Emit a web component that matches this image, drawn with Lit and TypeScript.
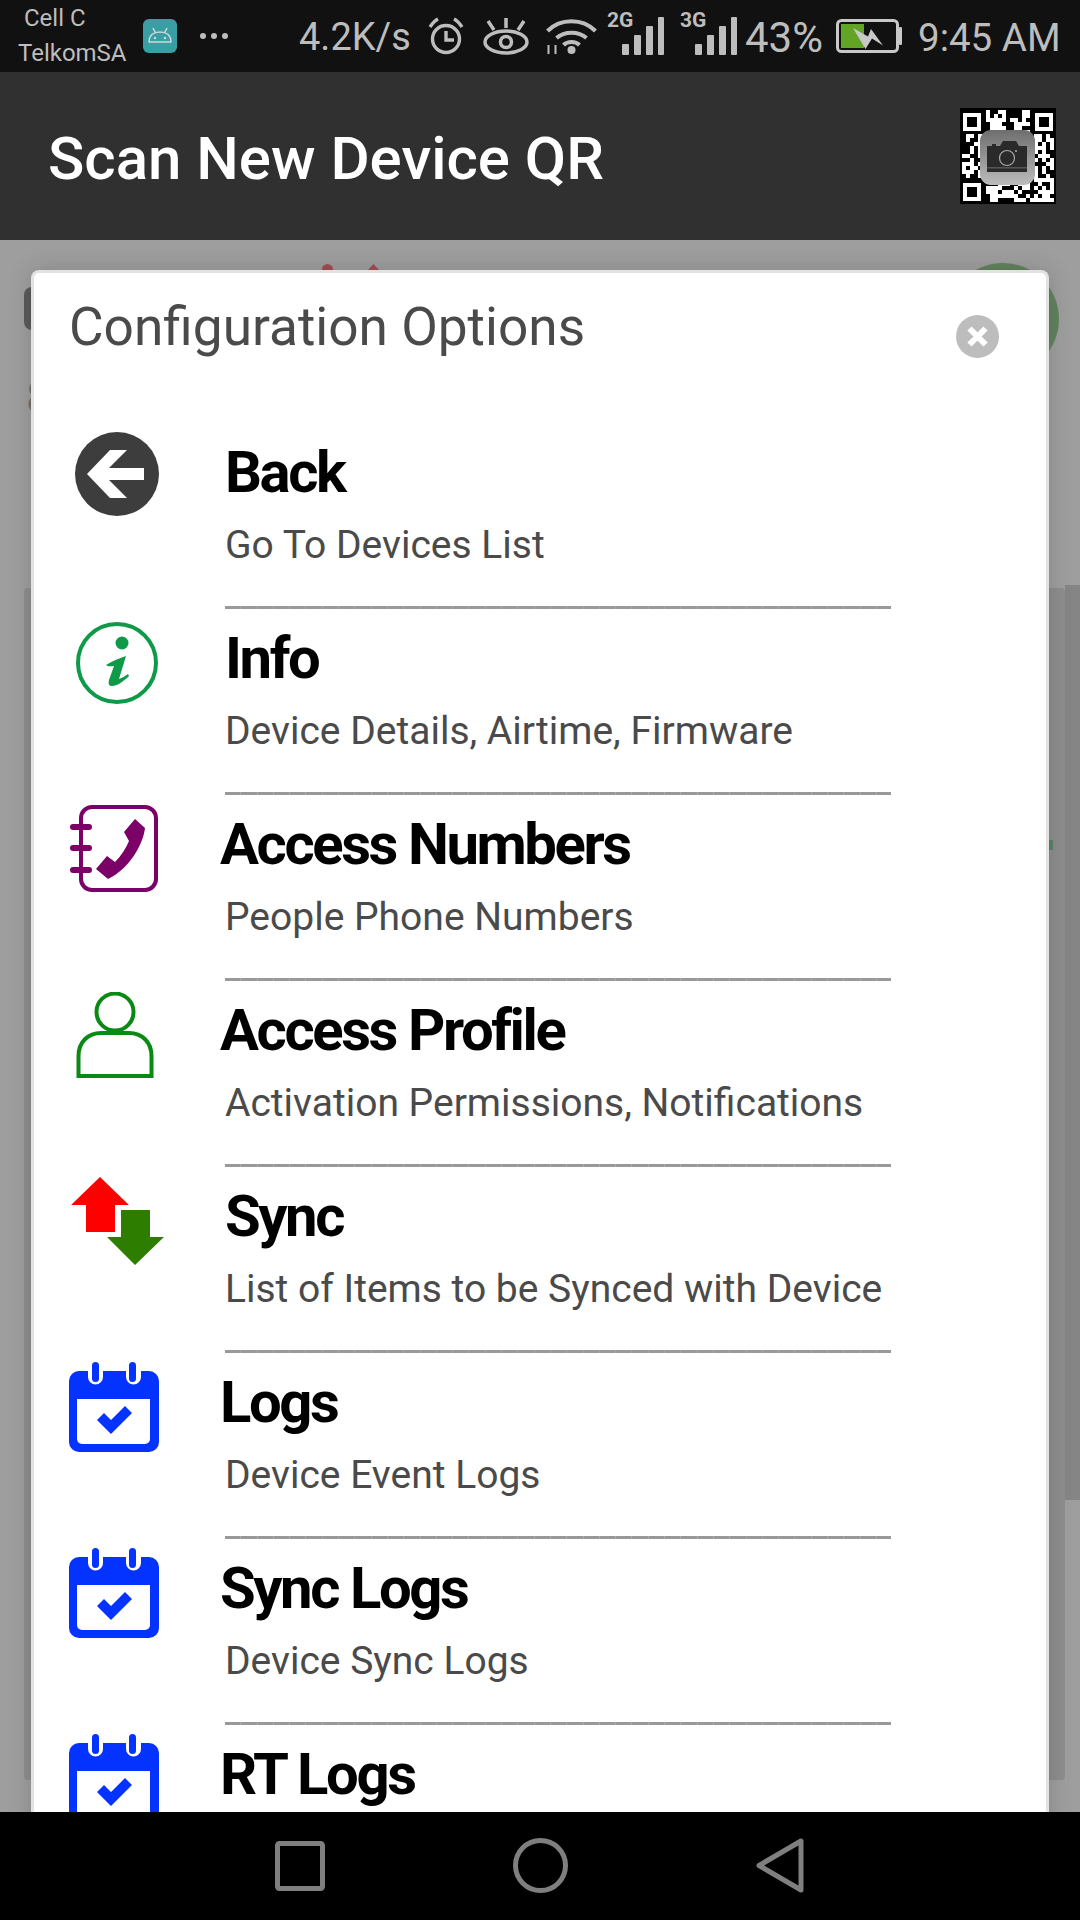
import { LitElement, html, css, svg } from 'lit';
import { customElement } from 'lit/decorators.js';

const calendar = svg`<svg viewBox="0 0 90 90" width="90" height="90">
  <path fill="#0433ff" d="M10 9h9v6a7.500 7.500 0 0 0 15 0V9h23v6a7.500 7.500 0 0 0 15 0V9h8a10 10 0 0 1 10 10v61a10 10 0 0 1-10 10H10A10 10 0 0 1 0 80V19A10 10 0 0 1 10 9z"/>
  <path fill="#fff" d="M8 37h73v40a5 5 0 0 1-5 5H13a5 5 0 0 1-5-5z"/>
  <rect x="23" y="0" width="7" height="20" rx="3.500" fill="#0433ff"/>
  <rect x="60" y="0" width="7" height="20" rx="3.500" fill="#0433ff"/>
  <path fill="#0433ff" d="M28 58l7-7 7 7 14-14 7 7-21 21z"/>
</svg>`;

const icons: Record<string, unknown> = {
  back: svg`<svg viewBox="0 0 84 84" width="84" height="84">
    <circle cx="42" cy="42" r="42" fill="#3d3d3d"/>
    <path fill="#fff" d="M12 42L35 18H52L34 36H69V48H34L52 66H35z"/>
  </svg>`,
  info: svg`<svg viewBox="0 0 82 82" width="82" height="82">
    <circle cx="41" cy="41" r="39" fill="none" stroke="#0f9a4a" stroke-width="4"/>
    <circle cx="46" cy="21" r="6.500" fill="#0f9a4a"/>
    <path fill="#0f9a4a" d="M30 43C36 39 44 36 50 34L43 57C46 56 49 54 52 52L53 54C47 60 41 64 36 64C33 64 32 62 33 58L38 44C35 44 32 45 30 43z"/>
  </svg>`,
  phone: svg`<svg viewBox="0 0 88 87" width="88" height="87">
    <rect x="11" y="2" width="75" height="83" rx="11" fill="none" stroke="#7b0068" stroke-width="4"/>
    <g fill="#7b0068"><rect x="0" y="19" width="22" height="6" rx="3"/><rect x="0" y="40" width="22" height="6" rx="3"/><rect x="0" y="62" width="22" height="6" rx="3"/></g>
    <path fill="#7b0068" d="M54 27L65 14L75 23C73 40 59 64 38 74L26 64L37 51L45 57C51 51 56 43 59 36z"/>
  </svg>`,
  profile: svg`<svg viewBox="0 0 78 86" width="78" height="86">
    <circle cx="39" cy="20" r="18.500" fill="none" stroke="#0a8a14" stroke-width="4"/>
    <path fill="none" stroke="#0a8a14" stroke-width="4" d="M2.500 84V64C2.500 50 12 41 25 41H53C66 41 75.500 50 75.500 64V84z"/>
  </svg>`,
  sync: svg`<svg viewBox="0 0 94 88" width="94" height="88">
    <path fill="#fe0000" d="M29 0L58 28H44V55H15V28H0z"/>
    <path fill="#2d7d00" d="M50 33H79V60H93L64 88 36 60H50z"/>
  </svg>`,
  calendar,
};

const rows = [
  { icon: 'back', title: 'Back', sub: 'Go To Devices List', shift: false },
  { icon: 'info', title: 'Info', sub: 'Device Details, Airtime, Firmware', shift: false },
  { icon: 'phone', title: 'Access Numbers', sub: 'People Phone Numbers', shift: true },
  { icon: 'profile', title: 'Access Profile', sub: 'Activation Permissions, Notifications', shift: true },
  { icon: 'sync', title: 'Sync', sub: 'List of Items to be Synced with Device', shift: false },
  { icon: 'calendar', title: 'Logs', sub: 'Device Event Logs', shift: true },
  { icon: 'calendar', title: 'Sync Logs', sub: 'Device Sync Logs', shift: true },
  { icon: 'calendar', title: 'RT Logs', sub: '', shift: true },
];

// not a real code, just modules that look like one
const qrModules = () => {
  const out: { x: number; y: number }[] = [];
  let seed = 7;
  for (let y = 1; y < 24; y++) {
    for (let x = 1; x < 24; x++) {
      seed = (seed * 137 + 59) % 1009;
      const inFinder = (x < 7 && y < 7) || (x > 17 && y < 7) || (x < 7 && y > 17);
      if (!inFinder && seed % 100 < 55) out.push({ x: x * 4 - 2, y: y * 4 - 2 });
    }
  }
  return out;
};

const finders = [
  [3, 5],
  [75, 5],
  [3, 75],
];

const bars = svg`<g fill="#bdbdbd">
  <rect x="16" y="35" width="7" height="11" rx="1"/><rect x="28" y="26" width="7" height="20" rx="1"/>
  <rect x="40" y="17" width="7" height="29" rx="1"/><rect x="52" y="8" width="6" height="38" rx="1"/>
</g>`;

@customElement('app-root')
export class AppRoot extends LitElement {
  static styles = css`
    :host {
      display: flex;
      flex-direction: column;
      width: 1080px;
      height: 1920px;
      overflow: hidden;
      font-family: Roboto, sans-serif;
      background: #000;
    }
    .status {
      height: 72px;
      background: #111;
      color: #bdbdbd;
      display: flex;
      align-items: center;
      flex: none;
    }
    .carrier {
      width: 125px;
      margin-left: 18px;
      font-size: 24px;
      line-height: 35px;
      white-space: nowrap;
    }
    .carrier span { padding-left: 6px; }
    .robot {
      width: 34px;
      height: 34px;
      border-radius: 6px;
      background: #3a9ea5;
    }
    .dots {
      display: flex;
      gap: 5px;
      margin-left: 23px;
    }
    .dots i {
      width: 6px;
      height: 6px;
      border-radius: 50%;
      background: #bdbdbd;
    }
    .speed, .pct, .clock {
      white-space: nowrap;
      padding-top: 2px;
    }
    .speed {
      margin-left: 71px;
      width: 113px;
      font-size: 38px;
    }
    .status svg { flex: none; }
    .alarm { margin-left: 16px; }
    .eye { margin-left: 19px; }
    .wifi { margin-left: 15px; }
    .sig2 { margin-left: 7px; }
    .sig3 { margin-left: 13px; }
    .pct {
      margin-left: 6px;
      width: 78px;
      font-size: 42px;
    }
    .batt { margin-left: 13px; }
    .clock {
      margin-left: 15px;
      font-size: 38.500px;
    }
    .bar {
      height: 168px;
      background: #303030;
      color: #fff;
      display: flex;
      align-items: center;
      justify-content: space-between;
      padding: 0 24px 0 48px;
      flex: none;
    }
    .bar h1 {
      margin: 0;
      padding-top: 4px;
      font-size: 60px;
      font-weight: 500;
    }
    .qr {
      position: relative;
      width: 96px;
      height: 96px;
    }
    .qr svg { display: block; }
    .qr .cam {
      position: absolute;
      left: 20px;
      top: 22px;
    }
    .main {
      flex: 1;
      position: relative;
      overflow: hidden;
      background: #9e9e9e;
    }
    .back-panel {
      position: absolute;
      left: 24px;
      right: 15px;
      top: 348px;
      height: 1192px;
      background: #8e8e8e;
      border-radius: 4px;
    }
    .back-strip {
      position: absolute;
      right: 0;
      top: 345px;
      width: 15px;
      height: 915px;
      background: #858585;
    }
    .back-tick {
      position: absolute;
      left: 1049px;
      top: 600px;
      width: 4px;
      height: 10px;
      background: #5d8268;
    }
    .back-pill {
      position: absolute;
      left: 24px;
      top: 47px;
      width: 20px;
      height: 43px;
      border-radius: 8px;
      background: #5a5a5a;
    }
    .back-num {
      position: absolute;
      left: 26px;
      top: 132px;
      font-size: 44px;
      line-height: 52px;
      color: #707070;
    }
    .back-circle {
      position: absolute;
      left: 947px;
      top: 23px;
      width: 112px;
      height: 112px;
      border-radius: 50%;
      background: #62835f;
    }
    .back-dot {
      position: absolute;
      left: 322px;
      top: 24px;
      width: 11px;
      height: 11px;
      border-radius: 50%;
      background: #a04f50;
    }
    .back-tri {
      position: absolute;
      left: 368px;
      top: 24px;
    }
    .modal {
      position: absolute;
      left: 31px;
      top: 30px;
      width: 1018px;
      height: 1700px;
      box-sizing: border-box;
      background: #fff;
      border: 3px solid #e2e2e2;
      border-bottom: none;
      border-radius: 8px 8px 0 0;
      box-shadow: 0 0 24px rgba(0, 0, 0, 0.16);
    }
    .modal-head {
      display: flex;
      justify-content: space-between;
      padding: 24px 47px 0 35px;
      height: 155px;
      box-sizing: border-box;
      color: #4a4a4a;
    }
    .modal-head h2 {
      margin: 0;
      font-size: 53.200px;
      font-weight: 400;
      line-height: 60px;
    }
    .close {
      margin-top: 18px;
      width: 43px;
      height: 43px;
    }
    .row {
      display: grid;
      grid-template-columns: 191px 1fr;
      height: 186px;
    }
    .icon svg { display: block; }
    .i-back { margin: 4px 0 0 41px; }
    .i-info { margin: 8px 0 0 42px; }
    .i-phone { margin: 5px 0 0 36px; }
    .i-profile { margin: 6px 0 0 42px; }
    .i-sync { margin: 5px 0 0 37px; }
    .i-calendar { margin: 4px 0 0 35px; }
    .row-text { padding-top: 12px; }
    .row-title {
      font-size: 58px;
      font-weight: 700;
      line-height: 64px;
      letter-spacing: -2.400px;
      color: #000;
      white-space: nowrap;
    }
    .shift { margin-left: -5px; }
    .row-sub {
      font-size: 39px;
      line-height: 50px;
      margin-top: 16px;
      color: #4a4a4a;
      white-space: nowrap;
    }
    /* the original rule is a line of underscores, so it has faint joints */
    .rule {
      width: 666px;
      height: 3px;
      margin-top: 36px;
      background: repeating-linear-gradient(90deg, #999 0, #999 15.300px, #ababab 15.300px, #ababab 16.300px);
    }
    .nav {
      height: 108px;
      background: #000;
      flex: none;
    }
    .nav svg { display: block; }
  `;

  private renderRow(r: (typeof rows)[number]) {
    return html`<div class="row">
      <div class="icon i-${r.icon}">${icons[r.icon]}</div>
      <div class="row-text">
        <div class="row-title ${r.shift ? 'shift' : ''}">${r.title}</div>
        ${r.sub ? html`<div class="row-sub">${r.sub}</div><div class="rule"></div>` : ''}
      </div>
    </div>`;
  }

  render() {
    return html`
      <div class="status">
        <div class="carrier"><span>Cell C</span><br />TelkomSA</div>
        <div class="robot">
          <svg viewBox="0 0 34 34" width="34" height="34">
            <path fill="none" stroke="#cfd8d8" stroke-width="1.500" d="M6 23c0-7 5-10 11-10s11 3 11 10zM10 9l2.500 5M24 9l-2.500 5" />
            <circle cx="12" cy="19" r="1.200" fill="#cfd8d8" /><circle cx="22" cy="19" r="1.200" fill="#cfd8d8" />
          </svg>
        </div>
        <div class="dots"><i></i><i></i><i></i></div>
        <div class="speed">4.2K/s</div>
        <svg class="alarm" viewBox="0 0 36 38" width="36" height="38" fill="none" stroke="#bdbdbd" stroke-width="3.400">
          <circle cx="18" cy="22" r="13.500" /><path d="M18 14v9h8M2 10c2-3 4-6 8-8M34 10c-2-3-4-6-8-8" />
        </svg>
        <svg class="eye" viewBox="0 0 46 37" width="46" height="37" fill="none" stroke="#bdbdbd" stroke-width="3.500">
          <ellipse cx="23" cy="24" rx="21" ry="11" /><circle cx="23" cy="24" r="5.500" />
          <path d="M5 3l6 9M23 0v10M41 3l-6 9" />
        </svg>
        <svg class="wifi" viewBox="0 0 52 38" width="55" height="38" fill="none" stroke="#bdbdbd" stroke-width="4">
          <path d="M2 14C15 1 37 1 50 14M11 21c8-7 22-7 30 0M18 28c4-4 12-4 16 0" />
          <circle cx="26" cy="33" r="4" fill="#bdbdbd" stroke="none" />
          <path stroke-width="2" d="M3 28v9M10 28v9" />
        </svg>
        <svg class="sig2" viewBox="0 0 60 54" width="60" height="54">
          <text x="1" y="18" font-size="21" font-weight="700" fill="#bdbdbd" font-family="Roboto">2G</text>${bars}
        </svg>
        <svg class="sig3" viewBox="0 0 60 54" width="60" height="54">
          <text x="1" y="18" font-size="21" font-weight="700" fill="#bdbdbd" font-family="Roboto">3G</text>${bars}
        </svg>
        <div class="pct">43%</div>
        <svg class="batt" viewBox="0 0 67 34" width="67" height="34">
          <rect x="1.500" y="1.500" width="60" height="31" rx="4" fill="none" stroke="#c8c8c8" stroke-width="3" />
          <rect x="5" y="5" width="23" height="24" fill="#62a424" />
          <rect x="63" y="8" width="3" height="18" rx="1" fill="#c8c8c8" />
          <path fill="#c8c8c8" d="M17 9L32 17.500 35 10 47 26.500 36 19.600 29.500 30z" />
        </svg>
        <div class="clock">9:45 AM</div>
      </div>
      <div class="bar">
        <h1>Scan New Device QR</h1>
        <div class="qr">
          <svg viewBox="0 0 96 96" width="96" height="96" shape-rendering="crispEdges">
            <rect width="96" height="96" fill="#000" />
            ${qrModules().map((m) => svg`<rect x="${m.x}" y="${m.y}" width="4" height="4" fill="#fff" />`)}
            ${finders.map(
              ([x, y]) => svg`<rect x="${x}" y="${y}" width="18" height="18" fill="#fff" /><rect x="${x + 4}" y="${y + 4}" width="10" height="10" fill="#000" />`,
            )}
          </svg>
          <svg class="cam" viewBox="0 0 55 55" width="55" height="55">
            <defs>
              <linearGradient id="cg" x1="0" y1="0" x2="0" y2="1"><stop offset="0" stop-color="#6e6e6e" /><stop offset="1" stop-color="#bcbcbc" /></linearGradient>
            </defs>
            <rect width="55" height="55" rx="11" fill="url(#cg)" />
            <path fill="#2a2a2a" d="M7 16h5v-2h4v2h4l3-5h13l3 5h8v26H7z" />
            <circle cx="27" cy="28" r="7.500" fill="none" stroke="#aaa" stroke-width="1.200" />
            <circle cx="36" cy="21" r="1" fill="#aaa" />
            <rect x="7" y="37" width="40" height="1.500" fill="#555" />
          </svg>
        </div>
      </div>
      <div class="main">
        <div class="back-panel"></div>
        <div class="back-strip"></div>
        <div class="back-tick"></div>
        <div class="back-pill"></div>
        <div class="back-num">8</div>
        <div class="back-circle"></div>
        <div class="back-dot"></div>
        <svg class="back-tri" viewBox="0 0 11 6" width="11" height="6"><path d="M0 6l5.500-6 5.500 6z" fill="#a04f50" /></svg>
        <div class="modal">
          <div class="modal-head">
            <h2>Configuration Options</h2>
            <svg class="close" viewBox="0 0 43 43">
              <circle cx="21.500" cy="21.500" r="21.500" fill="#bdbdbd" />
              <path d="M13.500 13.500l16 16M29.500 13.500l-16 16" stroke="#fff" stroke-width="6" />
            </svg>
          </div>
          ${rows.map((r) => this.renderRow(r))}
        </div>
      </div>
      <div class="nav">
        <svg viewBox="0 0 1080 108" width="1080" height="108" fill="none" stroke="#7f7f7f" stroke-width="5">
          <rect x="277.500" y="31.500" width="45" height="45" rx="2" />
          <circle cx="540.500" cy="53.500" r="25" />
          <path d="M801 29v49L759 53.500z" stroke-linejoin="round" />
        </svg>
      </div>
    `;
  }
}
